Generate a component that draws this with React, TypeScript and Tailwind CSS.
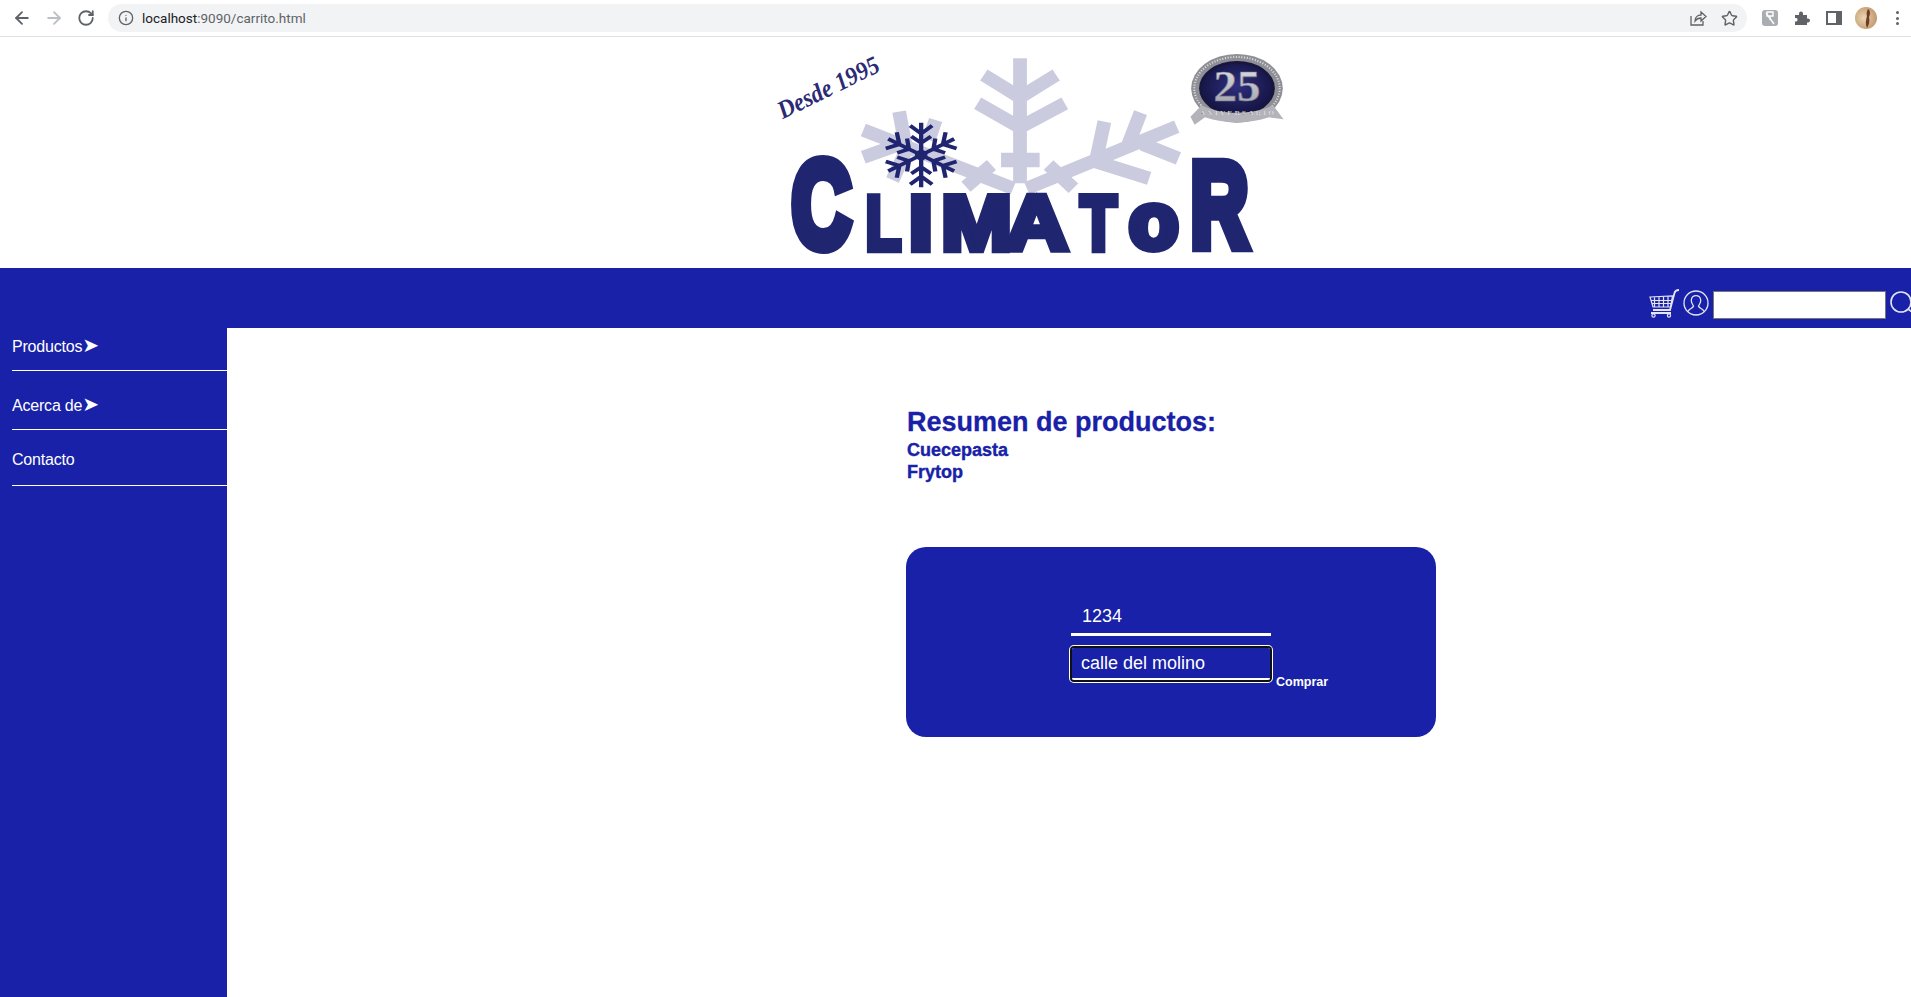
import { ArrowLeft, ArrowRight, RotateCw, Star, Info } from "lucide-react";

const Flake = () => (
  <g stroke="#cbcbe0" strokeWidth="40" fill="none">
    <path d="M755 55V430M650 105L755 172L860 105M632 190L755 262L885 190" />
    <path d="M700 360H812" strokeWidth="44" />
    <path d="M300 270L735 445M404 215L425 330M510 240L490 300M300 352L440 300M385 420L425 330M598 440L672 375" />
    <path d="M775 445L1210 260M1000 245L975 365M1105 218L1065 325M1215 355L1110 312M1130 415L975 365M838 375L910 445" />
  </g>
);

const DarkFlake = () => (
  <g transform="translate(468 345) scale(1.14 1)" stroke="#20256f" strokeWidth="11" fill="none">
    {[0, 60, 120, 180, 240, 300].map((a) => (
      <g key={a} transform={`rotate(${a})`}>
        <path d="M0 0V-97M-28 -88L0 -64L28 -88M-25 -56L0 -36L25 -56" />
      </g>
    ))}
    <circle r="16" fill="#20256f" stroke="none" />
  </g>
);

const Medal = () => (
  <g>
    <defs>
      <linearGradient id="silver" x1="0" y1="0" x2="0" y2="1">
        <stop offset="0" stopColor="#e6e6ea" />
        <stop offset="1" stopColor="#9b9ba6" />
      </linearGradient>
      <radialGradient id="navy" cx="0.5" cy="0.45" r="0.6">
        <stop offset="0" stopColor="#2f2f80" />
        <stop offset="1" stopColor="#12123f" />
      </radialGradient>
    </defs>
    <ellipse cx="1385" cy="145" rx="133" ry="103" fill="#8f8f96" />
    <ellipse cx="1385" cy="145" rx="124" ry="94" fill="none" stroke="#e2e2e6" strokeWidth="6" strokeDasharray="3 5" />
    <ellipse cx="1385" cy="145" rx="110" ry="82" fill="#16163f" />
    <ellipse cx="1385" cy="145" rx="101" ry="74" fill="url(#navy)" />
    <path d="M1250 230L1282 196C1340 226 1430 226 1490 196L1520 238L1478 232C1420 252 1350 252 1292 232L1262 254Z" fill="#b3b3b9" />
    <text x="1385" y="182" textAnchor="middle" fontFamily="'Liberation Serif', serif" fontWeight="700" fontSize="136" fill="url(#silver)" stroke="#77778a" strokeWidth="2">25</text>
    <text x="1385" y="224" textAnchor="middle" fontFamily="'Liberation Serif', serif" fontWeight="700" fontSize="20" fill="#f6f6f8" stroke="#55555f" strokeWidth="0.5" textLength="214" lengthAdjust="spacing">ANIVERSARIO</text>
  </g>
);

const Letter = ({ x, y, w, size, s, children }: { x: number; y: number; w: number; size: number; s: number; children: string }) => (
  <text x={x} y={y} textLength={w} lengthAdjust="spacingAndGlyphs" fontFamily="'Liberation Sans', Arial, sans-serif" fontWeight="700" fontSize={size} fill="#20256f" stroke="#20256f" strokeWidth={s}>
    {children}
  </text>
);

const Logo = () => (
  <svg viewBox="0 0 1568 690" preserveAspectRatio="none" className="w-[540px] h-[230px] block">
    <Flake />
    <text transform="translate(66 238) rotate(-27)" fontFamily="'Liberation Serif', serif" fontStyle="italic" fontWeight="700" fontSize="76" fill="#2b2b75" textLength="322" lengthAdjust="spacingAndGlyphs">Desde 1995</text>
    <Medal />
    <DarkFlake />
    <Letter x={92} y={622} w={172} size={365} s={36}>C</Letter>
    <Letter x={306} y={630} w={104} size={232} s={20}>L</Letter>
    <Letter x={432} y={630} w={70} size={232} s={20}>I</Letter>
    <Letter x={526} y={630} w={205} size={232} s={20}>M</Letter>
    <Letter x={712} y={630} w={182} size={232} s={20}>A</Letter>
    <Letter x={930} y={630} w={106} size={232} s={20}>T</Letter>
    <Letter x={1072} y={624} w={142} size={232} s={24}>o</Letter>
    <Letter x={1250} y={622} w={168} size={362} s={34}>R</Letter>
  </svg>
);

const Toolbar = () => (
  <div className="h-[37px] border-b border-[#dee1e6] bg-white flex items-center pl-[12px] shrink-0">
    <div className="flex items-center gap-[12px] text-[#5f6368]">
      <ArrowLeft size={20} strokeWidth={2.2} />
      <ArrowRight size={20} strokeWidth={2.2} className="text-[#bcbfc3]" />
      <RotateCw size={18} strokeWidth={2.4} className="mx-[1px]" />
    </div>
    <div className="ml-[12px] w-[1639px] h-[28px] rounded-full bg-[#f1f3f4] flex items-center pl-[10px] pr-[9px]">
      <Info size={16} strokeWidth={2} className="text-[#5f6368]" />
      <span className="ml-[8px] text-[13.5px] font-['Roboto',sans-serif] text-[#5f6368]">
        <span className="text-[#202124]">localhost</span>:9090/carrito.html
      </span>
      <div className="ml-auto flex items-center gap-[14px] text-[#5f6368]">
        <svg width="18" height="18" viewBox="0 0 18 18" fill="none" stroke="currentColor" strokeWidth="1.3">
          <path d="M2 7V16H14V12M6 12C6 8 9 6 12 6V3L17 7.5L12 12V9C9.5 9 7.5 10 6 12Z" />
        </svg>
        <Star size={17} strokeWidth={2} />
      </div>
    </div>
    <div className="ml-[15px] flex items-center gap-[16px] text-[#5f6368]">
      <div className="w-[16px] h-[16px] rounded-[3px] bg-[#a9acb0] flex items-center justify-center">
        <svg width="12" height="14" viewBox="0 0 12 14" fill="none" stroke="#fff" strokeWidth="1.4">
          <path d="M3 1H9V5H3ZM6 5V9M2 2L10 13" />
        </svg>
      </div>
      <svg width="16" height="16" viewBox="0 0 16 16" fill="currentColor">
        <path d="M1 5H5V3.5A2 2 0 0 1 9 3.5V5H13V8.5H14A2 2 0 0 1 14 12.5H13V15H1V11.5H2.5A2 2 0 0 0 2.5 8H1Z" />
      </svg>
      <svg width="16" height="16" viewBox="0 0 16 16">
        <path d="M1 2H15V14H1Z" fill="none" stroke="currentColor" strokeWidth="2" />
        <path d="M10 2H15V14H10Z" fill="currentColor" />
      </svg>
      <svg width="22" height="22" viewBox="0 0 22 22" className="-ml-[3px]">
        <defs>
          <radialGradient id="av" cx="0.4" cy="0.5" r="0.7">
            <stop offset="0" stopColor="#ecd6b4" />
            <stop offset="1" stopColor="#b98f62" />
          </radialGradient>
        </defs>
        <circle cx="11" cy="11" r="11" fill="url(#av)" />
        <path d="M13 2C16 4 15 8 14 10C15 14 14 18 12 21C10 17 11 13 12 9C11 6 12 4 13 2Z" fill="#6e3b24" />
      </svg>
      <div className="flex flex-col gap-[2.5px] ml-[3px]">
        <div className="w-[3px] h-[3px] rounded-full bg-[#5f6368]" />
        <div className="w-[3px] h-[3px] rounded-full bg-[#5f6368]" />
        <div className="w-[3px] h-[3px] rounded-full bg-[#5f6368]" />
      </div>
    </div>
  </div>
);

const TopBar = () => (
  <div className="h-[60px] bg-[#1821a7] shrink-0 flex items-start overflow-hidden pt-[23px] pl-[1649px]">
    <svg width="31" height="29" viewBox="0 0 31 29" fill="none" stroke="#e4e4f4" strokeWidth="1.2" className="shrink-0 -mt-[2px]">
      <path d="M30 1C27 1 26 2 25.5 4L21 21H4" strokeWidth="1.8" />
      <path d="M1 8L23.5 7L21.5 18H4ZM1.5 11.5H23M2.5 14.5H22M5.5 8V18M10 8V18M14.5 7.5V18M19 7.5V18" />
      <path d="M2 24H22" strokeWidth="2" />
      <circle cx="4.5" cy="26.5" r="1.6" />
      <circle cx="20" cy="26.5" r="1.6" />
    </svg>
    <svg width="26" height="26" viewBox="0 0 26 26" fill="none" stroke="#e4e4f4" strokeWidth="1.3" className="shrink-0 ml-[3px] -mt-[1px]">
      <circle cx="13" cy="13" r="12" />
      <path d="M5 21.5C6 18.5 10 18.5 10.5 16C8.5 13 8 10.5 8.5 9C9.5 4.5 16.5 4.5 17.5 9C18 10.5 17.5 13 15.5 16C16 18.5 20 18.5 21 21.5" />
    </svg>
    <input readOnly className="shrink-0 ml-[4px] w-[173px] h-[28px] bg-white border border-[#767676] outline-none" />
    <svg width="26" height="26" viewBox="0 0 26 26" fill="none" stroke="#e4e4f4" strokeWidth="1.6" className="shrink-0 ml-[4px]">
      <circle cx="11" cy="11" r="10" />
      <path d="M18 18L25 23" />
    </svg>
  </div>
);

const menuItems = [
  { label: "Productos", arrow: true, box: "h-[43px] pt-[8px]" },
  { label: "Acerca de", arrow: true, box: "h-[59px] pt-[24px]" },
  { label: "Contacto", arrow: false, box: "h-[56px] pt-[21px]" },
];

const Sidebar = () => (
  <aside className="w-[227px] shrink-0 bg-[#1821a7] pl-[12px] text-white text-[16px] leading-[18px] font-['Liberation_Sans',Arial,sans-serif] tracking-[-0.2px]">
    {menuItems.map((m) => (
      <div key={m.label} className={`${m.box} border-b border-white`}>
        {m.label}
        {m.arrow && <span className="font-['DejaVu_Sans',sans-serif] text-[20px] leading-[18px]">➤</span>}
      </div>
    ))}
  </aside>
);

export default function App() {
  return (
    <div className="h-[997px] w-[1911px] flex flex-col overflow-hidden bg-white">
      <Toolbar />
      <div className="h-[231px] shrink-0 pt-[3px] flex justify-center pl-[149px]">
        <Logo />
      </div>
      <TopBar />
      <div className="flex flex-1">
        <Sidebar />
        <main className="pl-[680px] pt-[79px] font-['Liberation_Sans',Arial,sans-serif] text-[#1821a7] font-bold">
          <h2 className="text-[27px] leading-[31px] [-webkit-text-stroke:0.3px_#1821a7]">Resumen de productos:</h2>
          <p className="text-[18px] leading-[22px] mt-[1px] [-webkit-text-stroke:0.4px_#1821a7]">Cuecepasta</p>
          <p className="text-[18px] leading-[22px] [-webkit-text-stroke:0.4px_#1821a7]">Frytop</p>
          <div className="mt-[64px] -ml-[1px] w-[530px] h-[190px] rounded-[20px] bg-[#1821a7] pl-[165px] pt-[53px]">
            <input readOnly value="1234" className="block w-[200px] h-[36px] pl-[11px] bg-transparent border-b-[3px] border-white text-white text-[18px] font-normal outline-none" />
            <div className="mt-[12px] ml-[1px] flex items-end">
              <input readOnly value="calle del molino" className="block w-[198px] h-[32px] pl-[9px] bg-transparent border-b-[2px] border-white rounded-[2px] text-white text-[18px] font-normal outline-none shadow-[0_0_0_2px_#101010,0_0_0_3px_#ffffff]" />
              <button className="ml-[6px] -mb-[10px] text-white text-[12.5px] font-bold leading-[16px]">Comprar</button>
            </div>
          </div>
        </main>
      </div>
    </div>
  );
}
